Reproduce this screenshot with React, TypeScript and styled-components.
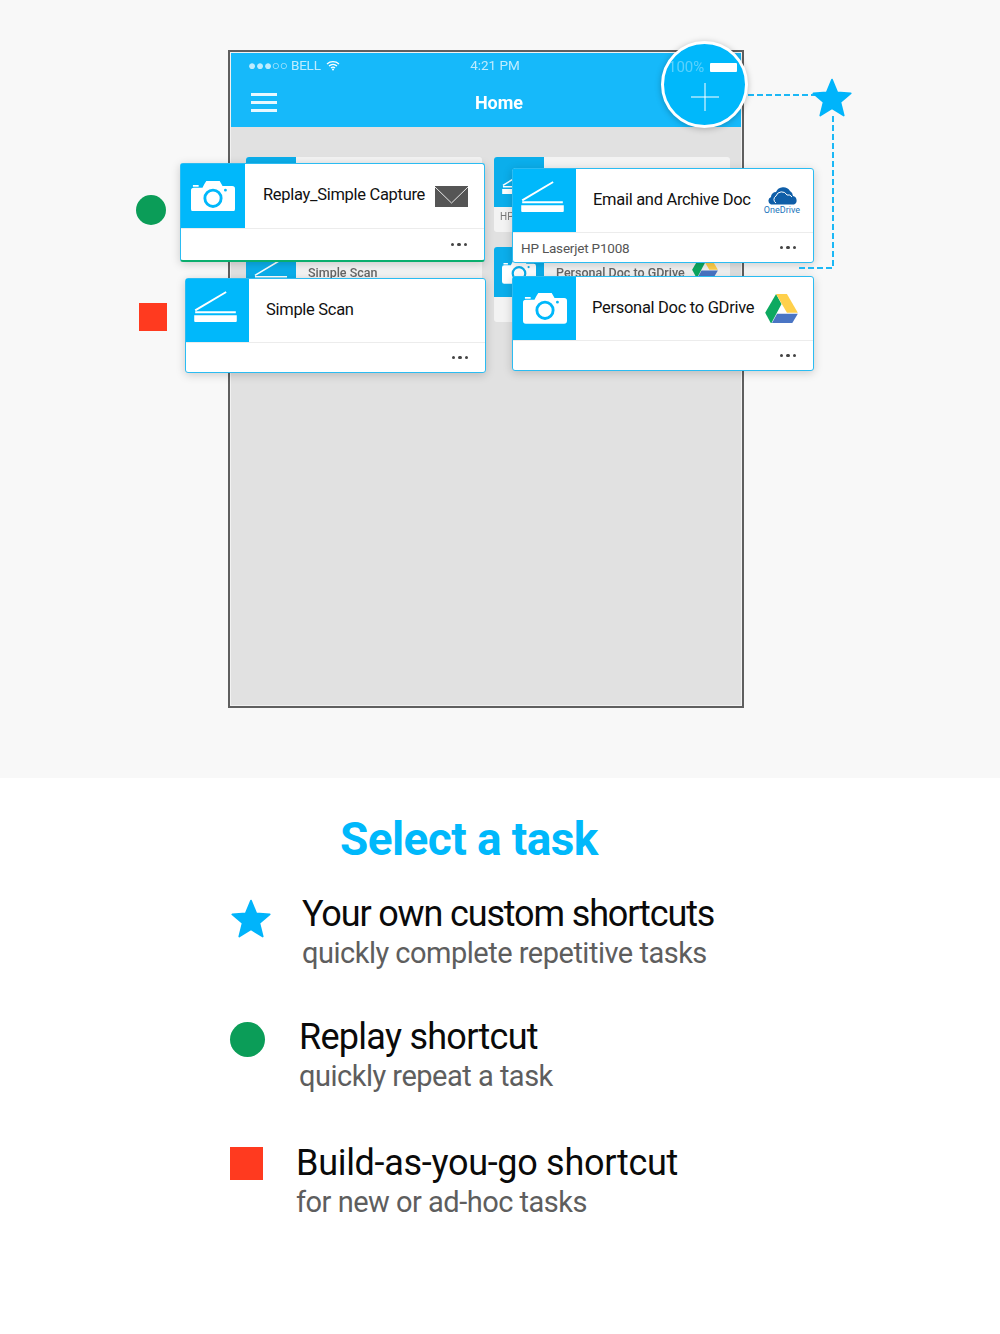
import styled, { createGlobalStyle } from "styled-components";

const Blue = "#00b8fb";

const GlobalStyle = createGlobalStyle`
  html, body {
    margin: 0;
    padding: 0;
    background: #ffffff;
    font-family: Roboto, "Noto Sans", sans-serif;
  }
`;

const Page = styled.div`
  width: 1000px;
  height: 1334px;
  overflow: hidden;
  background: #ffffff;
`;

const Hero = styled.section`
  position: relative;
  box-sizing: border-box;
  height: 778px;
  padding: 50px 0 0 228px;
  background: #f8f8f8;
`;

const Phone = styled.div`
  box-sizing: border-box;
  width: 516px;
  height: 658px;
  border: 2px solid #5f5f5f;
  background: #e1e1e1;
  box-shadow: inset 0 0 0 1px #f2f2f2;
  padding: 1px;
`;

const AppBar = styled.header`
  height: 74px;
  background: #16b9fa;
  color: #fff;
`;

const StatusBar = styled.div`
  display: grid;
  grid-template-columns: 1fr 60px 1fr;
  align-items: center;
  height: 24px;
  padding: 0 3px 2px 17px;
  font-size: 13.5px;
  color: #ffffffb8;
  filter: blur(0.5px);
`;

const StatusLeft = styled.div`
  display: flex;
  align-items: center;
  gap: 5px;
  letter-spacing: -0.2px;
`;

const StatusTime = styled.span`
  text-align: center;
  padding-left: 4px;
  white-space: nowrap;
`;

const StatusOverlay = styled.div`
  position: absolute;
  left: 668px;
  top: 58px;
  display: flex;
  align-items: center;
  gap: 6px;
  font-size: 15px;
  color: #ffffff59;
  filter: blur(0.6px);
`;

const Battery = styled.span`
  width: 27px;
  height: 9px;
  background: #fff;
  border-radius: 1px;
`;

const NavBar = styled.div`
  display: grid;
  grid-template-columns: 26px 1fr 26px;
  align-items: center;
  height: 50px;
  padding: 0 20px 4px 20px;
  box-sizing: border-box;
`;

const Burger = styled.div`
  display: flex;
  flex-direction: column;
  gap: 5px;
  & > span {
    height: 3px;
    background: #fff;
    opacity: 0.9;
  }
`;

const NavTitle = styled.div`
  text-align: center;
  padding-left: 26px;
  font-size: 18px;
  font-weight: 700;
  filter: blur(0.4px);
`;

const GhostGrid = styled.div`
  display: grid;
  grid-template-columns: 236px 236px;
  grid-auto-rows: 75px;
  gap: 15px 12px;
  padding: 30px 0 0 15px;
`;

const GhostCard = styled.div`
  display: flex;
  flex-direction: column;
  overflow: hidden;
  background: #f3f3f3;
  border-radius: 3px;
  filter: blur(0.5px);
`;

const GhostTop = styled.div`
  display: flex;
  align-items: center;
  height: 50px;
  padding-right: 12px;
  font-size: 12.5px;
  font-weight: 500;
  color: #666;
  white-space: nowrap;
`;

const GhostTile = styled.div`
  flex: none;
  display: flex;
  align-items: center;
  justify-content: center;
  width: 50px;
  height: 50px;
  margin-right: 12px;
  background: #0baeeb;
`;

const GhostLogo = styled.div`
  margin: -8px 0 0 auto;
`;

const GhostFoot = styled.div`
  padding: 4px 6px;
  font-size: 10px;
  color: #777;
`;

const Card = styled.article<{ $x: number; $y: number; $h: number; $w: number; $green?: boolean }>`
  position: absolute;
  left: ${(p) => p.$x}px;
  top: ${(p) => p.$y}px;
  box-sizing: border-box;
  width: ${(p) => p.$w}px;
  height: ${(p) => p.$h}px;
  display: flex;
  flex-direction: column;
  background: #fff;
  border: 1px solid #2bbcf2;
  border-bottom: ${(p) => (p.$green ? "2px solid #0aae6e" : "1px solid #2bbcf2")};
  border-radius: 3px;
  box-shadow: 0 2px 10px rgba(0, 0, 0, 0.18);
`;

const CardMain = styled.div`
  flex: none;
  display: flex;
  align-items: center;
  border-bottom: 1px solid #ececec;
`;

const Tile = styled.div<{ $size: number }>`
  flex: none;
  display: flex;
  align-items: center;
  justify-content: center;
  width: ${(p) => p.$size}px;
  height: ${(p) => p.$size}px;
  background: ${Blue};
`;

const ScannerHolder = styled.div`
  display: flex;
  margin: -8px 4px 0 0;
`;

const CardTitle = styled.div<{ $pad: number }>`
  flex: 1;
  padding: 0 0 3px ${(p) => p.$pad}px;
  font-size: 16.5px;
  letter-spacing: -0.3px;
  color: #111;
  white-space: nowrap;
`;

const Service = styled.div<{ $right: number }>`
  flex: none;
  display: flex;
  flex-direction: column;
  align-items: center;
  margin-right: ${(p) => p.$right}px;
`;

const ServiceLabel = styled.span`
  margin-top: 1px;
  font-size: 9px;
  line-height: 9px;
  color: #1c75bc;
`;

const CardFoot = styled.div`
  flex: 1;
  display: flex;
  align-items: center;
  justify-content: space-between;
  padding: 0 17px 0 8px;
  font-size: 13.5px;
  letter-spacing: -0.2px;
  color: #555;
`;

const Dots = styled.div`
  display: flex;
  gap: 3px;
  margin-left: auto;
  & > span {
    width: 3.5px;
    height: 3.5px;
    border-radius: 50%;
    background: #444;
  }
`;

const PlusButton = styled.div`
  position: absolute;
  left: 661px;
  top: 41px;
  box-sizing: border-box;
  width: 87px;
  height: 87px;
  display: flex;
  align-items: flex-end;
  justify-content: center;
  padding-bottom: 14px;
  border: 3px solid #fff;
  border-radius: 50%;
  background: ${Blue};
  box-shadow: 0 1px 6px rgba(0, 0, 0, 0.25);
`;

const Connector = styled.svg`
  position: absolute;
  left: 740px;
  top: 70px;
`;

const StarPlace = styled.div`
  position: absolute;
  left: 811px;
  top: 77px;
`;

const MarkerDot = styled.div`
  position: absolute;
  left: 136px;
  top: 195px;
  width: 30px;
  height: 30px;
  border-radius: 50%;
  background: #0b9d58;
`;

const MarkerSquare = styled.div`
  position: absolute;
  left: 139px;
  top: 303px;
  width: 28px;
  height: 28px;
  background: #ff3a1f;
`;

const Legend = styled.section`
  padding-top: 31px;
`;

const Heading = styled.h1`
  margin: 0 0 24px 340px;
  font-size: 46px;
  line-height: 60px;
  font-weight: 700;
  letter-spacing: -0.6px;
  color: ${Blue};
`;

const Row = styled.div<{ $left: number; $gap: number; $after: number }>`
  display: flex;
  align-items: flex-start;
  gap: ${(p) => p.$gap}px;
  margin: 0 0 ${(p) => p.$after}px ${(p) => p.$left}px;
`;

const RowIcon = styled.div<{ $top: number }>`
  flex: none;
  display: flex;
  width: 38px;
  padding-top: ${(p) => p.$top}px;
  & > svg {
    flex: none;
  }
`;

const RowDot = styled.div`
  width: 35px;
  height: 35px;
  border-radius: 50%;
  background: #0b9d58;
`;

const RowSquare = styled.div`
  width: 33px;
  height: 33px;
  background: #ff3a1f;
`;

const RowTitle = styled.div<{ $track: number }>`
  font-size: 36px;
  line-height: 42px;
  letter-spacing: ${(p) => p.$track}px;
  color: #0a0a0a;
  white-space: nowrap;
`;

const RowSub = styled.div`
  font-size: 29px;
  line-height: 36px;
  letter-spacing: -0.5px;
  color: #5e5e5e;
  white-space: nowrap;
`;

const CameraIcon = ({ width = 44, color = "#fff" }: { width?: number; color?: string }) => (
  <svg width={width} height={width * 0.7} viewBox="0 0 46 32">
    <path
      fill={color}
      fillRule="evenodd"
      d="M2 4h6v2H2zM14 3 16 0h14l3 5h10a3 3 0 0 1 3 3v21a3 3 0 0 1-3 3H3a3 3 0 0 1-3-3V10a3 3 0 0 1 3-3h9zM23 8a10 10 0 1 0 0 20 10 10 0 0 0 0-20zm0 3a7 7 0 1 1 0 14 7 7 0 0 1 0-14zM36 8a1.500 1.500 0 1 0 0 3 1.500 1.500 0 0 0 0-3z"
    />
  </svg>
);

const ScannerIcon = ({ width = 43, color = "#fff" }: { width?: number; color?: string }) => (
  <svg width={width} height={width * 0.72} viewBox="0 0 44 32">
    <path fill="none" stroke={color} strokeWidth="2" d="M1 20 33 1" />
    <path fill={color} d="M1 21h42v2H1zM0 25h44v6a1 1 0 0 1-1 1H1a1 1 0 0 1-1-1z" />
  </svg>
);

const MailIcon = () => (
  <svg width="33" height="21" viewBox="0 0 33 21">
    <rect width="33" height="21" fill="#555" />
    <path d="M0 1 16.500 17 33 1" fill="none" stroke="#e8e8e8" strokeWidth="1" />
  </svg>
);

const CloudIcon = () => (
  <svg width="32" height="19" viewBox="0 0 32 19">
    <path
      fill="#0f5ea8"
      d="M5 11a5 5 0 0 1 5-5 8 8 0 0 1 14-1 6 6 0 0 1 3 5 4.500 4.500 0 0 1 1 8.500H5a4 4 0 0 1 0-7.500z"
    />
    <path
      fill="none"
      stroke="#fff"
      strokeWidth="1"
      d="M10 17a4 4 0 0 1 0-7 6 6 0 0 1 11-1 4.500 4.500 0 0 1 5 2"
    />
  </svg>
);

const DriveIcon = ({ size = 33 }: { size?: number }) => (
  <svg width={size} height={size * 0.9} viewBox="0 0 33 30">
    <path fill="#0da960" d="M11 0l5.500 10L6 30 0 19z" />
    <path fill="#ffd04b" d="M11 0h11l11 19H22z" />
    <path fill="#4a75c4" d="M6.500 30 12 20h21l-6 10z" />
  </svg>
);

const MoreDots = () => (
  <Dots>
    <span />
    <span />
    <span />
  </Dots>
);

const StarIcon = ({ size }: { size: number }) => (
  <svg width={size} height={size} viewBox="0 0 24 24">
    <path
      fill="#00b4fb"
      stroke="#00b4fb"
      strokeWidth="1"
      strokeLinejoin="round"
      d="M12 1.500l3 7.300 7.700.6-5.900 5 1.900 7.600-6.700-4.100-6.700 4.100 1.900-7.600-5.900-5 7.700-.6z"
    />
  </svg>
);

export default function App() {
  return (
    <Page>
      <GlobalStyle />
      <Hero>
        <Phone>
          <AppBar>
            <StatusBar>
              <StatusLeft>
                <span>●●●○○ BELL</span>
                <svg width="14" height="11" viewBox="0 0 14 11">
                  <path
                    d="M1 4a9 9 0 0 1 12 0M3 6a6 6 0 0 1 8 0M5 8a3 3 0 0 1 4 0"
                    fill="none"
                    stroke="#fff"
                    strokeWidth="1.300"
                  />
                  <circle cx="7" cy="9.500" r="1" fill="#fff" />
                </svg>
              </StatusLeft>
              <StatusTime>4:21 PM</StatusTime>
            </StatusBar>
            <NavBar>
              <Burger>
                <span />
                <span />
                <span />
              </Burger>
              <NavTitle>Home</NavTitle>
            </NavBar>
          </AppBar>
          <GhostGrid>
            <GhostCard>
              <GhostTop>
                <GhostTile />
              </GhostTop>
            </GhostCard>
            <GhostCard>
              <GhostTop>
                <GhostTile>
                  <ScannerIcon width={34} />
                </GhostTile>
              </GhostTop>
              <GhostFoot>HP</GhostFoot>
            </GhostCard>
            <GhostCard>
              <GhostTop>
                <GhostTile>
                  <ScannerIcon width={34} />
                </GhostTile>
                Simple Scan
              </GhostTop>
            </GhostCard>
            <GhostCard>
              <GhostTop>
                <GhostTile>
                  <CameraIcon width={34} />
                </GhostTile>
                Personal Doc to GDrive
                <GhostLogo>
                  <DriveIcon size={26} />
                </GhostLogo>
              </GhostTop>
            </GhostCard>
          </GhostGrid>
        </Phone>

        <Card $x={180} $y={163} $w={305} $h={99} $green>
          <CardMain>
            <Tile $size={64}>
              <CameraIcon />
            </Tile>
            <CardTitle $pad={18}>Replay_Simple Capture</CardTitle>
            <Service $right={16}>
              <MailIcon />
            </Service>
          </CardMain>
          <CardFoot>
            <MoreDots />
          </CardFoot>
        </Card>

        <Card $x={185} $y={278} $w={301} $h={95}>
          <CardMain>
            <Tile $size={63}>
              <ScannerHolder>
                <ScannerIcon />
              </ScannerHolder>
            </Tile>
            <CardTitle $pad={17}>Simple Scan</CardTitle>
          </CardMain>
          <CardFoot>
            <MoreDots />
          </CardFoot>
        </Card>

        <Card $x={512} $y={168} $w={302} $h={95}>
          <CardMain>
            <Tile $size={63}>
              <ScannerHolder>
                <ScannerIcon />
              </ScannerHolder>
            </Tile>
            <CardTitle $pad={17}>Email and Archive Doc</CardTitle>
            <Service $right={13}>
              <CloudIcon />
              <ServiceLabel>OneDrive</ServiceLabel>
            </Service>
          </CardMain>
          <CardFoot>
            HP Laserjet P1008
            <MoreDots />
          </CardFoot>
        </Card>

        <Card $x={512} $y={276} $w={302} $h={95}>
          <CardMain>
            <Tile $size={63}>
              <CameraIcon />
            </Tile>
            <CardTitle $pad={16}>Personal Doc to GDrive</CardTitle>
            <Service $right={15}>
              <DriveIcon />
            </Service>
          </CardMain>
          <CardFoot>
            <MoreDots />
          </CardFoot>
        </Card>

        <Connector width="115" height="205" viewBox="0 0 115 205">
          <path
            d="M8 25H76M93 46V198H58"
            fill="none"
            stroke="#1cb8f6"
            strokeWidth="2"
            strokeDasharray="6 3"
          />
        </Connector>
        <PlusButton>
          <svg width="28" height="28" viewBox="0 0 28 28">
            <path d="M14 0v28M0 14h28" stroke="#fff" strokeWidth="1" fill="none" />
          </svg>
        </PlusButton>
        <StatusOverlay>
          <span>100%</span>
          <Battery />
        </StatusOverlay>
        <StarPlace>
          <StarIcon size={42} />
        </StarPlace>
        <MarkerDot />
        <MarkerSquare />
      </Hero>

      <Legend>
        <Heading>Select a task</Heading>
        <Row $left={230} $gap={34} $after={45}>
          <RowIcon $top={5}>
            <StarIcon size={42} />
          </RowIcon>
          <div>
            <RowTitle $track={-1.15}>Your own custom shortcuts</RowTitle>
            <RowSub>quickly complete repetitive tasks</RowSub>
          </div>
        </Row>
        <Row $left={230} $gap={31} $after={48}>
          <RowIcon $top={6}>
            <RowDot />
          </RowIcon>
          <div>
            <RowTitle $track={-0.73}>Replay shortcut</RowTitle>
            <RowSub>quickly repeat a task</RowSub>
          </div>
        </Row>
        <Row $left={230} $gap={28} $after={0}>
          <RowIcon $top={5}>
            <RowSquare />
          </RowIcon>
          <div>
            <RowTitle $track={-0.3}>Build-as-you-go shortcut</RowTitle>
            <RowSub>for new or ad-hoc tasks</RowSub>
          </div>
        </Row>
      </Legend>
    </Page>
  );
}
